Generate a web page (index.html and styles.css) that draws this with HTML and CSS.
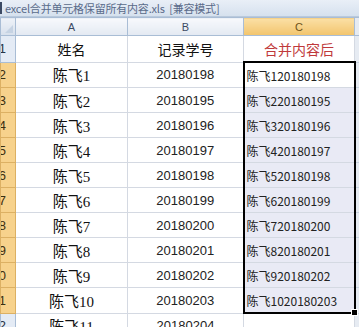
FILE: index.html
```html
<!DOCTYPE html>
<html lang="zh-CN">
<head>
    <meta charset="UTF-8">
    <title>excel合并单元格保留所有内容.xls</title>
    <link rel="stylesheet" href="styles.css">
</head>
<body>
    <div class="titlebar">
        <span class="tab-mark"></span>
        <span class="tab-text">excel合并单元格保留所有内容.xls&nbsp;&nbsp;[兼容模式]</span>
    </div>

    <div class="sheet">
        <table class="grid">
            <colgroup>
                <col class="c-rh">
                <col class="c-a">
                <col class="c-b">
                <col class="c-c">
                <col class="c-rest">
            </colgroup>
            <tr class="colhead">
                <th class="corner"><span class="corner-tri"></span></th>
                <th>A</th>
                <th>B</th>
                <th class="sel">C</th>
                <th class="rest"></th>
            </tr>
            <tr class="r-head">
                <th class="rh">1</th>
                <td class="t-name">姓名</td>
                <td class="t-name">记录学号</td>
                <td class="t-red">合并内容后</td>
                <td class="rest"></td>
            </tr>
            <tr>
                <th class="rh sel">2</th>
                <td class="name">陈飞1</td>
                <td class="num">20180198</td>
                <td class="merged first active">陈飞120180198</td>
                <td class="rest"></td>
            </tr>
            <tr>
                <th class="rh sel">3</th>
                <td class="name">陈飞2</td>
                <td class="num">20180195</td>
                <td class="merged">陈飞220180195</td>
                <td class="rest"></td>
            </tr>
            <tr>
                <th class="rh sel">4</th>
                <td class="name">陈飞3</td>
                <td class="num">20180196</td>
                <td class="merged">陈飞320180196</td>
                <td class="rest"></td>
            </tr>
            <tr>
                <th class="rh sel">5</th>
                <td class="name">陈飞4</td>
                <td class="num">20180197</td>
                <td class="merged">陈飞420180197</td>
                <td class="rest"></td>
            </tr>
            <tr>
                <th class="rh sel">6</th>
                <td class="name">陈飞5</td>
                <td class="num">20180198</td>
                <td class="merged">陈飞520180198</td>
                <td class="rest"></td>
            </tr>
            <tr>
                <th class="rh sel">7</th>
                <td class="name">陈飞6</td>
                <td class="num">20180199</td>
                <td class="merged">陈飞620180199</td>
                <td class="rest"></td>
            </tr>
            <tr>
                <th class="rh sel">8</th>
                <td class="name">陈飞7</td>
                <td class="num">20180200</td>
                <td class="merged">陈飞720180200</td>
                <td class="rest"></td>
            </tr>
            <tr>
                <th class="rh sel">9</th>
                <td class="name">陈飞8</td>
                <td class="num">20180201</td>
                <td class="merged">陈飞820180201</td>
                <td class="rest"></td>
            </tr>
            <tr>
                <th class="rh sel">10</th>
                <td class="name">陈飞9</td>
                <td class="num">20180202</td>
                <td class="merged">陈飞920180202</td>
                <td class="rest"></td>
            </tr>
            <tr>
                <th class="rh sel">11</th>
                <td class="name">陈飞10</td>
                <td class="num">20180203</td>
                <td class="merged last">陈飞1020180203<span class="fill-handle"></span></td>
                <td class="rest"></td>
            </tr>
            <tr>
                <th class="rh">12</th>
                <td class="name">陈飞11</td>
                <td class="num">20180204</td>
                <td></td>
                <td class="rest"></td>
            </tr>
        </table>
    </div>
</body>
</html>
```

FILE: styles.css
```css
body {
    margin: 0;
    width: 359px;
    height: 327px;
    overflow: hidden;
    background: #fff;
    font-family: "SimSun", "Noto Sans CJK SC", sans-serif;
}

/* window tab strip */
.titlebar {
    height: 17px;
    background: linear-gradient(#e9eff7, #d6e1ee);
    display: flex;
    align-items: center;
    gap: 3px;
    border-bottom: 1px solid #b9c9dc;
    box-sizing: border-box;
}
.tab-mark {
    width: 2px;
    height: 12px;
    background: #3c4a63;
}
.tab-text {
    font-family: "Noto Sans CJK SC", sans-serif;
    font-size: 11px;
    color: #5a6b8a;
    white-space: nowrap;
    letter-spacing: -0.2px;
}

.sheet {
    overflow: hidden;
}
.grid {
    border-collapse: collapse;
    table-layout: fixed;
    width: 359px;
}
.c-rh { width: 15px; }
.c-a { width: 112px; }
.c-b { width: 116px; }
.c-c { width: 111px; }
.c-rest { width: 5px; }

td, th {
    padding: 0;
    border: 1px solid #d4d9e2;
    height: 24px;
    white-space: nowrap;
    overflow: hidden;
}

/* column letters */
.colhead th {
    height: 17px;
    font-family: "Liberation Sans", Arial, sans-serif;
    font-weight: normal;
    font-size: 11px;
    color: #3b4a63;
    background: linear-gradient(#f7f9fc, #e3e9f2);
    border-color: #a9bdd5;
    text-align: center;
}
.colhead th.sel {
    background: linear-gradient(#fbe0a6, #f2c46c);
    color: #6d5318;
}
.colhead th.corner {
    background: linear-gradient(#eef2f8, #d7e0ec);
    position: relative;
}
.corner-tri {
    position: absolute;
    right: 2px;
    bottom: 2px;
    width: 0;
    height: 0;
    border-left: 8px solid transparent;
    border-bottom: 8px solid #c6d3e3;
}
.colhead th.rest {
    background: #e6ebf2;
}

/* row numbers: the window cuts the column, so only the last digit shows */
.rh {
    font-family: "Liberation Sans", Arial, sans-serif;
    font-weight: normal;
    font-size: 13px;
    color: #2a3444;
    background: #e4ebf5;
    border-color: #a9bdd5;
    direction: rtl;
    text-align: right;
    padding-right: 9px;
}
.rh.sel {
    background: #f7d28c;
    border-color: #dcb063;
    color: #3d2f10;
}

.r-head td { height: 25px; }

.t-name {
    text-align: center;
    font-size: 14px;
    color: #111;
}
.t-red {
    text-align: center;
    font-size: 14px;
    color: #c0393b;
}
.name {
    text-align: center;
    font-family: "Liberation Serif", "Noto Sans CJK SC", serif;
    font-size: 15px;
    color: #111;
}
.num {
    text-align: center;
    font-family: "Liberation Sans", Arial, sans-serif;
    font-size: 13px;
    color: #222;
}

/* selected range in column C */
.merged {
    background: #e9eaf5;
    font-size: 12px;
    color: #222;
    padding-left: 2px;
    border-left: 2px solid #000;
    border-right: 2px solid #000;
}
.merged.active { background: #fff; }
.merged.first { border-top: 2px solid #000; }
.merged.last {
    border-bottom: 2px solid #000;
    position: relative;
    overflow: visible;
}
.fill-handle {
    position: absolute;
    right: -4px;
    bottom: -4px;
    width: 5px;
    height: 5px;
    background: #000;
    border: 1px solid #fff;
}

td.rest {
    background: #e6ebf2;
    border-color: #c9d3e0;
}
```
